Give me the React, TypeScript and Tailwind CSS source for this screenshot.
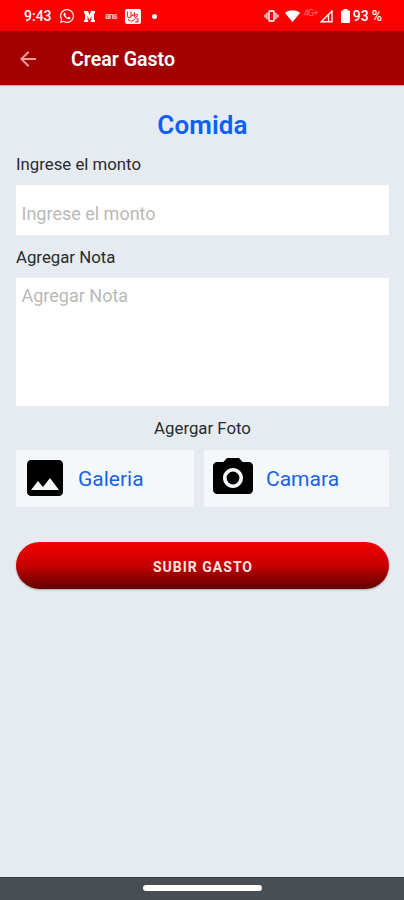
import { MdArrowBack, MdImage, MdPhotoCamera } from "react-icons/md";
import { FaWhatsapp } from "react-icons/fa";

function StatusBar() {
  return (
    <div className="flex h-[31px] shrink-0 items-center bg-[#fe0000] pl-6 pr-[22px] pt-px text-white">
      <span className="w-[35px] whitespace-nowrap text-[14px] font-medium leading-none">9:43</span>
      <FaWhatsapp className="size-4" />
      <svg className="ml-[9px] h-[11px] w-[11px]" viewBox="0 0 11 11" fill="#fff">
        <path d="M0 0h4l1.5 4L7 0h4v2.500h-1V9h1v2H6.800V9h.6V4.500L6 8.500H5L3.600 4.500V9h.6v2H0V9h1V2.500H0z" />
      </svg>
      <span className="ml-[10px] w-[13px] whitespace-nowrap text-[9px] font-bold leading-none tracking-[-0.9px] opacity-75">ans</span>
      <svg className="ml-[7px] h-[15px] w-4" viewBox="0 0 16 15" fill="none">
        <rect width="16" height="15" rx="2" fill="#fff" />
        <path d="M2.500 2.500v4c0 3 3.500 3 3.500 0v-4M6 3v4.500l2-2 1.500 2V3M10 6.500c1-2 3-1.500 2.500 0L10 9.500M3 10c2 3 5 3 7 0M11 10c3-1 3 1 0 3h3" stroke="#f33" strokeWidth="1.100" />
      </svg>
      <span className="ml-[11px] size-[5px] rounded-full bg-white" />
      <div className="ml-auto flex items-center">
        <svg className="h-3 w-[15px] opacity-85" viewBox="0 0 15 12" fill="none" stroke="#fff">
          <rect x="5" y="1" width="5" height="10" rx="1" strokeWidth="1.800" />
          <path d="M3 2.800v6.400M12 2.800v6.400M1 4.500v3M14 4.500v3" strokeWidth="1.500" />
        </svg>
        <svg className="ml-[6px] h-3 w-[15px]" viewBox="0 0 15 12" fill="#fff">
          <path d="M0 3C4-.6 11-.6 15 3L7.500 12z" />
        </svg>
        <span className="ml-[4px] w-[15px] whitespace-nowrap pb-[6px] text-[9px] leading-none tracking-[-0.7px] opacity-40">4G+</span>
        <svg className="ml-px h-[13px] w-[13px]" viewBox="0 0 13 13" fill="none">
          <path d="M1.200 11.800 12 1v10.800zM8.500 11.500v-6" stroke="#fff" strokeWidth="1.400" />
        </svg>
        <svg className="ml-[8px] h-[14px] w-[9px]" viewBox="0 0 9 14" fill="#fff">
          <path d="M2.500 0h4v1.500H8a1 1 0 0 1 1 1V13a1 1 0 0 1-1 1H1a1 1 0 0 1-1-1V2.500a1 1 0 0 1 1-1h1.500z" />
        </svg>
        <span className="ml-[3px] whitespace-nowrap text-[14px] font-medium leading-none">93</span>
        <span className="ml-[3px] text-[14px] font-medium leading-none">%</span>
      </div>
    </div>
  );
}

function PhotoButton({ kind, label }: { kind: "gallery" | "camera"; label: string }) {
  const Icon = kind === "gallery" ? MdImage : MdPhotoCamera;
  return (
    <button className="flex h-[57px] items-center bg-[#f5f8fa] pb-px pl-[5px] text-left">
      <Icon className="size-12 shrink-0 text-black" />
      <span className="ml-[9px] mt-px text-[21px] leading-6 text-[#1762e9]">{label}</span>
    </button>
  );
}

export default function App() {
  return (
    <div className="flex h-[900px] w-[404px] flex-col overflow-hidden bg-[#e5ebf1] font-[Roboto,sans-serif]">
      <StatusBar />
      <header className="flex h-[54px] shrink-0 items-center bg-[#a30000] pl-4 pt-px shadow-[0_1px_1px_#b9b4bb]">
        <MdArrowBack className="size-6 text-[#ec9c9c]" />
        <h1 className="ml-[31px] mt-[3px] text-[19.600px] font-semibold leading-6 text-white">Crear Gasto</h1>
      </header>
      <main className="flex flex-1 flex-col pl-4 pr-[15px] pt-[24px]">
        <h2 className="text-center text-[26px] font-semibold leading-8 tracking-[0.1px] text-[#0c60f4]">Comida</h2>
        <label htmlFor="monto" className="mt-[13px] text-[16.800px] leading-5 text-[#272b2e]">Ingrese el monto</label>
        <input id="monto" placeholder="Ingrese el monto" className="mt-[11px] h-[50px] bg-white px-[5.500px] pt-[6px] text-[18px] outline-none placeholder:text-[#b9b9b6]" />
        <label htmlFor="nota" className="mt-[12px] text-[16.800px] leading-5 text-[#272b2e]">Agregar Nota</label>
        <textarea id="nota" placeholder="Agregar Nota" className="mt-[11px] h-[128px] resize-none bg-white px-[5.500px] pt-[6px] text-[18px] leading-6 outline-none placeholder:text-[#b9b9b6]" />
        <p className="mt-[12px] text-center text-[16.800px] leading-5 text-[#272b2e]">Agergar Foto</p>
        <div className="mt-[12px] grid grid-cols-[178px_185px] gap-[10px]">
          <PhotoButton kind="gallery" label="Galeria" />
          <PhotoButton kind="camera" label="Camara" />
        </div>
        <button className="mt-[35px] h-[47px] rounded-full bg-linear-to-b from-[#f40000] via-[#c70000] to-[#600000] pl-px pt-[3px] text-[14px] font-bold tracking-[1px] text-[#ffe5e0] shadow-[0_1px_2px_#aaa]">
          SUBIR GASTO
        </button>
      </main>
      <footer className="flex h-[23px] shrink-0 justify-center border-t border-[#343b40] bg-[#474e54] pt-[7px]">
        <div className="h-[6px] w-[119px] rounded-full bg-white" />
      </footer>
    </div>
  );
}
